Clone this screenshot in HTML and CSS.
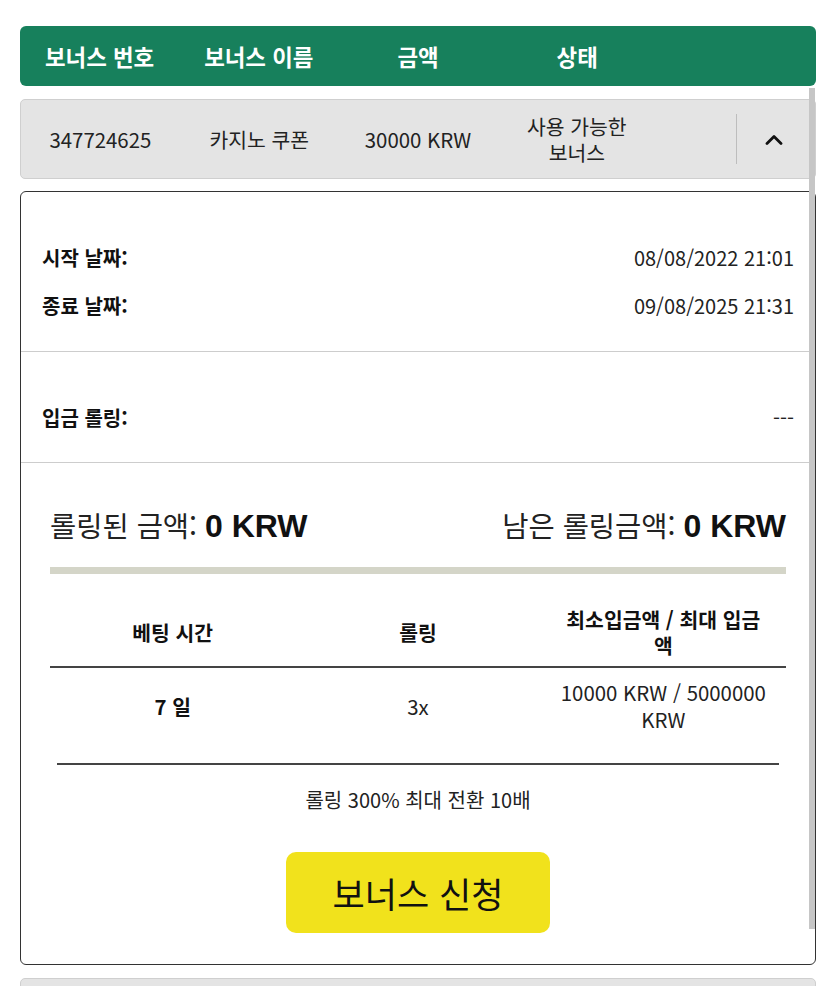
FILE: index.html
```html
<!DOCTYPE html>
<html lang="ko">
<head>
    <meta charset="UTF-8">
    <meta name="viewport" content="width=device-width, initial-scale=1.0">
    <title>보너스</title>
    <link rel="stylesheet" href="styles.css">
</head>
<body>
    <div class="page">
        <div class="bonus-head">
            <div class="col">보너스 번호</div>
            <div class="col">보너스 이름</div>
            <div class="col">금액</div>
            <div class="col">상태</div>
            <div class="col"></div>
        </div>

        <div class="bonus-list">
            <div class="bonus-row">
                <div class="col">347724625</div>
                <div class="col">카지노 쿠폰</div>
                <div class="col">30000 KRW</div>
                <div class="col">사용 가능한 보너스</div>
                <div class="col toggle">
                    <span class="sep"></span>
                    <span class="chev">
                        <svg width="18" height="11" viewBox="0 0 18 11"><polyline points="2,9.5 9,2.5 16,9.5" fill="none" stroke="#111" stroke-width="2.8" stroke-linecap="round" stroke-linejoin="round"/></svg>
                    </span>
                </div>
            </div>

            <div class="bonus-detail">
                <div class="sec dates">
                    <div class="line"><b>시작 날짜:</b><span>08/08/2022 21:01</span></div>
                    <div class="line"><b>종료 날짜:</b><span>09/08/2025 21:31</span></div>
                </div>
                <div class="sec deposit">
                    <div class="line"><b>입금 롤링:</b><span>---</span></div>
                </div>
                <div class="rolling">
                    <div class="totals">
                        <div>롤링된 금액: <b>0 KRW</b></div>
                        <div>남은 롤링금액: <b>0 KRW</b></div>
                    </div>
                    <div class="progress"></div>
                    <table class="terms">
                        <thead>
                            <tr>
                                <th>베팅 시간</th>
                                <th>롤링</th>
                                <th>최소입금액 / 최대 입금액</th>
                            </tr>
                        </thead>
                        <tbody>
                            <tr>
                                <td><b>7 일</b></td>
                                <td>3x</td>
                                <td>10000 KRW / 5000000 KRW</td>
                            </tr>
                        </tbody>
                    </table>
                    <hr class="rule">
                    <p class="note">롤링 300% 최대 전환 10배</p>
                    <button class="apply">보너스 신청</button>
                </div>
            </div>

            <div class="bonus-row"></div>

            <div class="scrollbar"></div>
        </div>
    </div>
</body>
</html>
```

FILE: styles.css
```css
* {
    box-sizing: border-box;
}
html, body {
    margin: 0;
    overflow: hidden;
    background: #fff;
}
body {
    font-family: "Noto Sans CJK KR", "Noto Sans", sans-serif;
    color: #222;
}
.page {
    padding: 26px 19px 0 20px;
}

.bonus-head {
    display: grid;
    grid-template-columns: repeat(5, 1fr);
    align-items: center;
    height: 60px;
    background: #17805c;
    border-radius: 6px;
    color: #fff;
    font-size: 22.4px;
    font-weight: 700;
}
.bonus-head .col {
    text-align: center;
}

.bonus-list {
    position: relative;
    padding-top: 13px;
}

.bonus-row {
    display: grid;
    grid-template-columns: repeat(5, 1fr);
    align-items: center;
    height: 80px;
    margin-bottom: 12px;
    background: #e4e4e4;
    border: 1px solid #cfcfcf;
    border-radius: 5px;
    font-size: 20.4px;
    line-height: 26px;
    word-break: keep-all;
}
.bonus-row .col {
    text-align: center;
    padding: 0 14px;
}
.bonus-row .toggle {
    display: flex;
    align-items: center;
    justify-content: flex-end;
    padding: 0 4px 0 0;
}
.sep {
    width: 1px;
    height: 50px;
    background: #bdbdbd;
}
.chev {
    width: 74px;
    display: flex;
    justify-content: center;
}
.chev svg {
    display: block;
}

.bonus-detail {
    border: 1px solid #333;
    border-radius: 6px;
    margin-bottom: 13px;
    background: #fff;
}
.sec {
    padding: 52px 21px 31px;
    border-bottom: 1px solid #cdcdcd;
}
.sec.deposit {
    padding: 52px 21px 30px;
}
.line {
    display: flex;
    justify-content: space-between;
    line-height: 28px;
    font-size: 20px;
}
.line + .line {
    margin-top: 20px;
}
.line b {
    font-weight: 700;
    color: #111;
}

.rolling {
    padding: 42px 29px 31px;
    text-align: center;
}
.totals {
    display: flex;
    justify-content: space-between;
    font-size: 28.5px;
    line-height: 40px;
}
.totals b {
    font-family: "Liberation Sans", Arial, sans-serif;
    font-size: 32px;
    color: #111;
}
.progress {
    height: 7px;
    margin-top: 21px;
    background: #d4d5c8;
}

.terms {
    width: 100%;
    margin-top: 20px;
    border-collapse: collapse;
    table-layout: fixed;
    font-size: 20.4px;
}
.terms th {
    padding: 12px 19px 8px;
    line-height: 26px;
    font-weight: 700;
    color: #111;
    border-bottom: 2px solid #444;
}
.terms td {
    padding: 11px 19px 11px;
    line-height: 27px;
}
.terms td b {
    font-weight: 700;
    color: #111;
}

.rule {
    margin: 19px 7px 0;
    border: 0;
    border-top: 2px solid #444;
}
.note {
    margin: 22px 0 0;
    font-size: 20px;
    line-height: 26px;
}
.apply {
    width: 264px;
    height: 81px;
    margin-top: 39px;
    border: 0;
    border-radius: 10px;
    background: #f1e21c;
    color: #111;
    font-family: inherit;
    font-size: 35px;
    cursor: pointer;
}

.scrollbar {
    position: absolute;
    top: 2px;
    right: 1px;
    width: 6px;
    height: 841px;
    background: #c6c6c6;
}
```
